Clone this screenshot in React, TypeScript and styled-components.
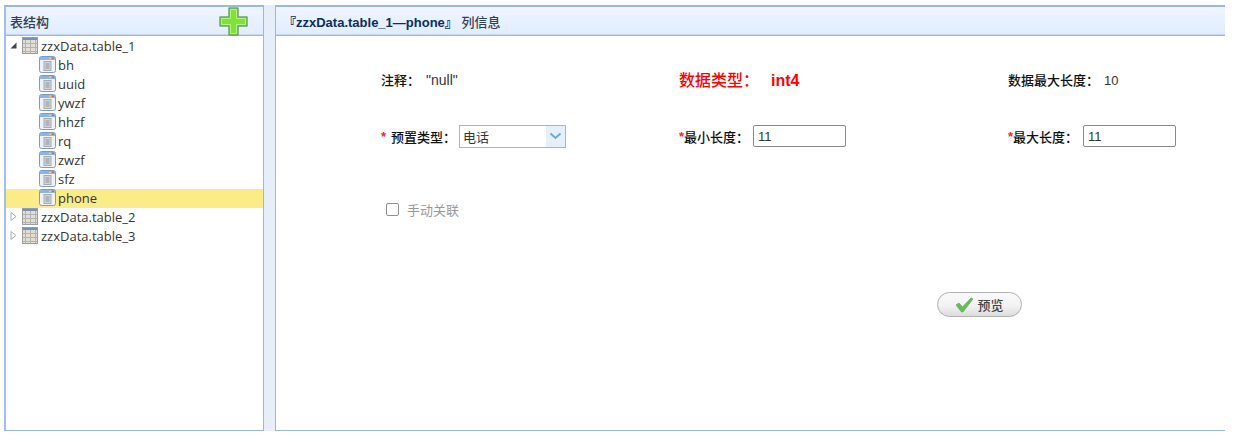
import React from "react";
import styled, { createGlobalStyle } from "styled-components";

const cjk = `"Liberation Sans", "Noto Sans CJK SC", sans-serif`;

const GlobalStyle = createGlobalStyle`
  html, body {
    margin: 0;
    padding: 0;
    background: #fff;
    font-family: ${cjk};
    overflow: hidden;
  }
`;

const Page = styled.div`
  width: 1241px;
  height: 442px;
  box-sizing: border-box;
  padding: 5px 16px 11px 4px;
  display: flex;
`;

const Panel = styled.section<{ $width?: number; $side?: boolean }>`
  box-sizing: border-box;
  display: flex;
  flex-direction: column;
  flex: ${(p) => (p.$width ? `0 0 ${p.$width}px` : "1 1 auto")};
  border-top: 2px solid #95b8e7;
  border-bottom: 1px solid #95b8e7;
  border-left: ${(p) => (p.$side ? "2px solid #a0bdec" : "1px solid #95b8e7")};
  border-right: ${(p) => (p.$side ? "1px solid #95b8e7" : "0")};
`;

const Splitter = styled.div`
  flex: 0 0 11px;
  background: #e6eefa;
`;

const PanelHeader = styled.header<{ $inset?: number }>`
  height: 29px;
  flex: none;
  box-sizing: border-box;
  padding: 0 15px 0 ${(p) => p.$inset ?? 4}px;
  display: flex;
  align-items: center;
  justify-content: space-between;
  background: linear-gradient(to bottom, #eff5ff 0%, #e0ecff 100%);
  border-bottom: 1px solid #95b8e7;
  box-shadow: inset 0 -1px 0 #c3d7f4;
  font-size: 13px;
  font-weight: 700;
  color: #0e2d5f;
`;

const HeaderTitle = styled.span`
  color: #333f55;
  font-weight: 500;
`;

const HeaderBold = styled.b`
  color: #0e2d5f;
`;

const Tree = styled.ul`
  list-style: none;
  margin: 1px 0 0;
  padding: 0;
`;

const TreeRow = styled.li<{ $selected?: boolean; $leaf?: boolean }>`
  height: 19px;
  box-sizing: border-box;
  padding-bottom: 2px;
  display: flex;
  align-items: center;
  padding-left: ${(p) => (p.$leaf ? "33px" : "4px")};
  background: ${(p) => (p.$selected ? "#fbec88" : "transparent")};
  font-family: "Open Sans", "Noto Sans", sans-serif;
  font-size: 13px;
  color: #333;
  white-space: nowrap;
`;

const Arrow = styled.svg`
  flex: 0 0 7px;
  margin-right: 5px;
`;

const RowIcon = styled.svg<{ $leaf?: boolean }>`
  flex: none;
  margin-right: ${(p) => (p.$leaf ? "2px" : "3px")};
`;

const FormArea = styled.div`
  flex: 1;
  padding: 35px 0 0 105px;
`;

const FormGrid = styled.div`
  display: grid;
  grid-template-columns: 298px 329px 1fr;
  grid-template-rows: 16px 38px;
  row-gap: 30px;
  align-items: center;
  font-size: 13px;
  color: #333;
`;

const Field = styled.div`
  display: flex;
  align-items: center;
  white-space: nowrap;
`;

const InfoField = styled(Field)`
  align-items: baseline;
`;

const Label = styled.span<{ $gap?: number }>`
  font-weight: 500;
  color: #111;
  margin-right: ${(p) => p.$gap ?? 0}px;
`;

const Star = styled.span<{ $gap?: number }>`
  color: #ff2020;
  font-weight: 700;
  margin-right: ${(p) => p.$gap ?? 0}px;
`;

const NoteValue = styled.span`
  font-size: 14px;
`;

const TypeField = styled(InfoField)`
  font-size: 16px;
  font-weight: 500;
  color: #ff0000;
`;

const TypeLabel = styled.span`
  margin-right: 12px;
`;

const TypeValue = styled.b`
  font-weight: 700;
`;

const SelectBox = styled.div`
  width: 107px;
  height: 23px;
  box-sizing: border-box;
  border: 1px solid #95b8e7;
  display: flex;
  align-items: center;
  justify-content: space-between;
  padding-left: 3px;
  color: #333;
`;

const SelectArrow = styled.span`
  width: 19px;
  height: 21px;
  background: #e6effc;
  display: flex;
  align-items: center;
  justify-content: center;
`;

const TextInput = styled.div`
  width: 93px;
  height: 22px;
  box-sizing: border-box;
  border: 1px solid #8a8a8a;
  border-radius: 2px;
  padding-left: 4px;
  display: flex;
  align-items: center;
  color: #333;
`;

const CheckRow = styled.label`
  margin: 45px 0 0 5px;
  display: flex;
  align-items: center;
  gap: 8px;
  font-size: 13px;
  color: #999;
`;

const CheckMark = styled.span`
  width: 13px;
  height: 13px;
  box-sizing: border-box;
  border: 1px solid #8f8f8f;
  border-radius: 2px;
`;

const ActionRow = styled.div`
  margin: 73px 0 0 556px;
`;

const PreviewButton = styled.button`
  width: 85px;
  height: 25px;
  padding: 0;
  display: flex;
  align-items: center;
  justify-content: center;
  gap: 3px;
  border: 1px solid #b0b0b0;
  border-radius: 13px;
  background: linear-gradient(to bottom, #fafafa 0%, #f2f2f2 55%, #dcdcdc 100%);
  font-family: ${cjk};
  font-size: 13px;
  font-weight: 500;
  color: #444;
`;

const TableIcon = () => (
  <RowIcon width="16" height="17" viewBox="0 0 16 17">
    <rect x="0" y="0" width="16" height="17" fill="#e2ded6" />
    <rect x="0" y="0" width="16" height="3" fill="#6f93c0" />
    {[3, 8, 13].map((x) => (
      <rect key={x} x={x} y="3" width="1" height="14" fill="#b5b3ae" />
    ))}
    {[6, 10, 14].map((y) => (
      <rect key={y} x="0" y={y} width="16" height="1" fill="#b5b3ae" />
    ))}
    <rect x="0.5" y="0.5" width="15" height="16" fill="none" stroke="#9a9da1" />
  </RowIcon>
);

const FieldIcon = () => (
  <RowIcon $leaf width="17" height="17" viewBox="0 0 17 17">
    <rect x="0.5" y="0.5" width="16" height="16" rx="2" fill="#eef1f5" stroke="#7a9cc4" />
    <rect x="1" y="1" width="15" height="3" fill="#8db4e2" />
    <rect x="10" y="1.5" width="2" height="1.5" fill="#e8d060" />
    <rect x="13" y="1.5" width="2" height="1.5" fill="#d8605a" />
    <rect x="5" y="5.5" width="7" height="9" fill="#d2d6db" stroke="#a6abb2" />
    <path d="M6.5 8h4M6.5 10h4M6.5 12h4" stroke="#8c9199" />
  </RowIcon>
);

const OpenArrow = () => (
  <Arrow width="7" height="7" viewBox="0 0 7 7">
    <path d="M6.5 0.5V6.5H0.5Z" fill="#444" />
  </Arrow>
);

const ClosedArrow = () => (
  <Arrow width="7" height="9" viewBox="0 0 7 9">
    <path d="M1 0.5L6 4.5L1 8.5Z" fill="#fff" stroke="#aaa" />
  </Arrow>
);

const PlusIcon = () => (
  <svg width="29" height="29" viewBox="0 0 29 29">
    <path
      d="M10 1H19V10H28V19H19V28H10V19H1V10H10Z"
      fill="#7fe234"
      stroke="#6aaa5c"
      strokeWidth="1.5"
      strokeLinejoin="round"
    />
    <path
      d="M11.5 2.5H17.5V11.5H26.5V17.5H17.5V26.5H11.5V17.5H2.5V11.5H11.5Z"
      fill="none"
      stroke="#b5f08a"
      strokeWidth="1"
    />
  </svg>
);

const CheckIcon = () => (
  <svg width="19" height="16" viewBox="0 0 19 16">
    <path
      d="M1 8L4 6L7.5 10L16 1L18 2L8 15H6.5Z"
      fill="#62c04e"
      stroke="#7f9f86"
      strokeWidth="0.8"
      strokeLinejoin="round"
    />
  </svg>
);

const fields = ["bh", "uuid", "ywzf", "hhzf", "rq", "zwzf", "sfz", "phone"];

export default function App() {
  return (
    <Page>
      <GlobalStyle />
      <Panel $width={260} $side>
        <PanelHeader>
          <HeaderTitle>表结构</HeaderTitle>
          <PlusIcon />
        </PanelHeader>
        <Tree>
          <TreeRow>
            <OpenArrow />
            <TableIcon />
            zzxData.table_1
          </TreeRow>
          {fields.map((name) => (
            <TreeRow key={name} $leaf $selected={name === "phone"}>
              <FieldIcon />
              {name}
            </TreeRow>
          ))}
          <TreeRow>
            <ClosedArrow />
            <TableIcon />
            zzxData.table_2
          </TreeRow>
          <TreeRow>
            <ClosedArrow />
            <TableIcon />
            zzxData.table_3
          </TreeRow>
        </Tree>
      </Panel>
      <Splitter />
      <Panel>
        <PanelHeader $inset={7}>
          <HeaderBold>
            『zzxData.table_1—phone』 <HeaderTitle>列信息</HeaderTitle>
          </HeaderBold>
        </PanelHeader>
        <FormArea>
          <FormGrid>
            <InfoField>
              <Label $gap={6}>注释：</Label>
              <NoteValue>"null"</NoteValue>
            </InfoField>
            <TypeField>
              <TypeLabel>数据类型：</TypeLabel>
              <TypeValue>int4</TypeValue>
            </TypeField>
            <InfoField>
              <Label $gap={5}>数据最大长度：</Label>10
            </InfoField>
            <Field>
              <Star $gap={5}>*</Star>
              <Label $gap={3}>预置类型：</Label>
              <SelectBox>
                电话
                <SelectArrow>
                  <svg width="13" height="8" viewBox="0 0 13 8">
                    <path d="M1.5 1.5L6.5 6L11.5 1.5" fill="none" stroke="#6aa8dc" strokeWidth="2" />
                  </svg>
                </SelectArrow>
              </SelectBox>
            </Field>
            <Field>
              <Star>*</Star>
              <Label $gap={4}>最小长度：</Label>
              <TextInput>11</TextInput>
            </Field>
            <Field>
              <Star>*</Star>
              <Label $gap={5}>最大长度：</Label>
              <TextInput>11</TextInput>
            </Field>
          </FormGrid>
          <CheckRow>
            <CheckMark />
            手动关联
          </CheckRow>
          <ActionRow>
            <PreviewButton>
              <CheckIcon />
              预览
            </PreviewButton>
          </ActionRow>
        </FormArea>
      </Panel>
    </Page>
  );
}
